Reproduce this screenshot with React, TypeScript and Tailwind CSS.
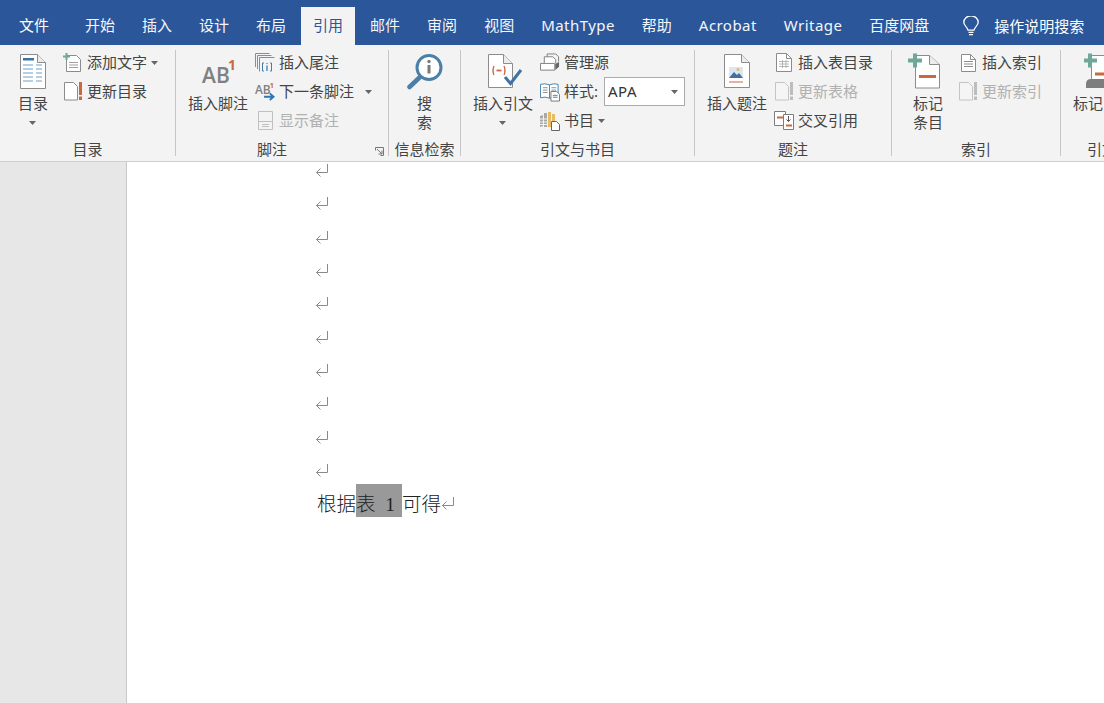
import React from 'react'

const tabs = ['开始', '插入', '设计', '布局', '引用', '邮件', '审阅', '视图', 'MathType', '帮助', 'Acrobat', 'Writage', '百度网盘']
const latinTabs = ['MathType', 'Acrobat', 'Writage']

function Caret({ className = '' }: { className?: string }) {
  return (
    <svg width="7" height="4" viewBox="0 0 7 4" className={className}>
      <path d="M0 0h7L3.5 4z" fill="#666" />
    </svg>
  )
}

function ReturnMark({ className = '' }: { className?: string }) {
  return (
    <svg width="14" height="14" viewBox="0 0 14 14" fill="none" stroke="#8a8a8a" strokeWidth="1" className={className}>
      <path d="M12.5 1v8.5H1.5M5.5 5.5l-4 4 4 4" />
    </svg>
  )
}

// --- ribbon icons ---
const TocIcon = () => (
  <svg width="26" height="35" viewBox="0 0 26 35" fill="none">
    <path d="M.5.5h17l8 8v26H.5z" fill="#fff" stroke="#8c8c8c" />
    <path d="M17.5.5v8h8" fill="#ececec" stroke="#8c8c8c" />
    <path d="M3 4h11v2.500H3z" fill="#3a74a5" />
    <path d="M3 11h10M16 11h6M3 15h10M16 15h6M3 19h10M16 19h6M3 23h10M16 23h6M3 27h10M16 27h6" stroke="#6f9fc4" />
  </svg>
)
const AddTextIcon = () => (
  <svg width="20" height="20" viewBox="0 0 20 20" fill="none">
    <path d="M3.500 2.500h10l4 4v12h-14z" fill="#fff" stroke="#8c8c8c" />
    <path d="M6 9.500h9M6 12h9M6 14.500h9" stroke="#a0a0a0" />
    <path d="M3.500 0v7M0 3.500h7" stroke="#6fa898" strokeWidth="2" />
  </svg>
)
const UpdateDocIcon = ({ muted }: { muted?: boolean }) => (
  <svg width="19" height="19" viewBox="0 0 19 19" fill="none">
    <path d="M.5.500h9l4 4v13.500h-13z" fill={muted ? '#f5f5f5' : '#fff'} stroke={muted ? '#c4c4c4' : '#8c8c8c'} />
    <path d="M15 0h3v13h-3zM15 14.500h3v3.500h-3z" fill={muted ? '#bdbdbd' : '#c8693f'} />
  </svg>
)
const EndnoteIcon = () => (
  <svg width="20" height="20" viewBox="0 0 20 20" fill="none">
    <path d="M.5 14V.5h14M2.500 16V2.500h14M4.500 18.500v-14h15" stroke="#8c8c8c" />
    <path d="M9 10H7.500v8H9M15 10h1.500v8H15" stroke="#3f7fb0" />
    <path d="M12 10v1M12 12.500V18" stroke="#3f7fb0" strokeWidth="1.300" />
  </svg>
)
const NextNoteIcon = () => (
  <svg width="21" height="21" viewBox="0 0 21 21">
    <text x="0" y="13" fontSize="12.500" fontWeight="600" fill="#808080" fontFamily="'Open Sans',sans-serif">AB</text>
    <text x="15.500" y="7" fontSize="7.500" fontWeight="700" fill="#c8693f" fontFamily="'Open Sans',sans-serif">1</text>
    <path d="M9.500 16h10M15.500 12.500l4 3.500-4 3.500" fill="none" stroke="#2e75b6" strokeWidth="2" />
  </svg>
)
const ShowNotesIcon = () => (
  <svg width="15" height="19" viewBox="0 0 15 19" fill="none" stroke="#c0c0c0">
    <path d="M.5.500h14v18H.5zM.5 10.500h14M4 13.500h7M4 15.500h7" />
  </svg>
)
const SearchIcon = () => (
  <svg width="37" height="37" viewBox="0 0 37 37" fill="none">
    <circle cx="23" cy="14.500" r="12" fill="#fff" stroke="#4a7fa8" strokeWidth="3" />
    <path d="M13.500 24.500L3.500 34" stroke="#4a7fa8" strokeWidth="4.500" strokeLinecap="round" />
    <circle cx="23" cy="8.500" r="1.700" fill="#7a7a7a" />
    <path d="M23 12v8.500" stroke="#7a7a7a" strokeWidth="3" />
  </svg>
)
const CiteIcon = () => (
  <svg width="40" height="36" viewBox="0 0 40 36" fill="none">
    <path d="M5.500 1.500h15l9 9v24h-24z" fill="#fff" stroke="#8c8c8c" />
    <path d="M20.500 1.500v9h9" fill="#ececec" stroke="#8c8c8c" />
    <path d="M11 13q-2 4.500 0 9M21 13q2 4.500 0 9" stroke="#c8693f" strokeWidth="1.300" />
    <path d="M13.500 17.500h5" stroke="#c8693f" strokeWidth="1.800" />
    <path d="M22 24l5.500 6.500L38 17" stroke="#3e75a5" strokeWidth="3" />
  </svg>
)
const SourcesIcon = () => (
  <svg width="21" height="19" viewBox="0 0 21 19" fill="none" stroke="#7d7d7d">
    <path d="M7.500 8V.500h9l3 3v5" />
    <path d="M4.500 10V3.500h9l3 3v4" fill="#fff" />
    <path d="M.5 10.500h15v7H.5z" fill="#fff" />
    <path d="M16 17.500l4-3.500V9l-4 2z" fill="#666" stroke="none" />
  </svg>
)
const StyleIcon = () => (
  <svg width="21" height="20" viewBox="0 0 21 20" fill="none">
    <path d="M10 2.500Q5 .5.500 2v14q5-1.500 9.500.5 4.500-2 9-.5V2q-4.500-1.500-9 .5zM10 2.500v14" fill="#fff" stroke="#3f7fb0" />
    <path d="M3 5.500h5M3 8h5M3 10.500h5M12 5.500h5M12 8h5" stroke="#8c8c8c" />
    <path d="M11.500 9.500h6l3 3v7h-9z" fill="#fff" stroke="#777" />
    <path d="M13.500 13.500h5M13.500 15.500h5" stroke="#3f7fb0" />
  </svg>
)
const BibIcon = () => (
  <svg width="20" height="20" viewBox="0 0 20 20" fill="none">
    <path d="M0 5l3-1v11l-3 1zM4 2h3v14H4z" fill="#a8a8a8" />
    <path d="M8 1h3v15H8z" fill="#e6bd66" />
    <path d="M12 3h3v7h-3z" fill="#e6bd66" />
    <path d="M0 8h7M0 11h7M0 13.500h7" stroke="#f3f3f3" />
    <path d="M11.500 10.500h5l3 3v6h-8z" fill="#fff" stroke="#666" />
  </svg>
)
const CaptionIcon = () => (
  <svg width="26" height="36" viewBox="0 0 26 36" fill="none">
    <path d="M.5 1.500h17l8 8v25H.5z" fill="#fff" stroke="#8c8c8c" />
    <path d="M17.500 1.500v8h8" fill="#ececec" stroke="#8c8c8c" />
    <path d="M5 14h14v11H5z" fill="#dce6f0" />
    <path d="M5 25l5-6 3 3 2-2 4 5z" fill="#41719c" />
    <circle cx="14" cy="16.500" r="1.500" fill="#e6bd66" />
    <path d="M5 29h14" stroke="#c8693f" />
  </svg>
)
const TableListIcon = () => (
  <svg width="16" height="19" viewBox="0 0 16 19" fill="none" stroke="#8c8c8c">
    <path d="M.5.500h10l5 5v13H.5z" fill="#fff" />
    <path d="M10.500.500v5h5" />
    <path d="M3 8.500h10M3 11h10M3 13.500h10M6.500 7v8M10 7v8" stroke="#a8a8a8" strokeWidth=".8" />
  </svg>
)
const CrossRefIcon = () => (
  <svg width="20" height="19" viewBox="0 0 20 19" fill="none">
    <path d="M.5.500h11v14H.5z" fill="#fff" stroke="#7d7d7d" />
    <path d="M3 6.500h6" stroke="#c8693f" strokeWidth="2" />
    <path d="M9.500 3.500h10v15h-10z" fill="#fff" stroke="#7d7d7d" />
    <path d="M14.500 5v5.500M12.500 8.500l2 2 2-2" stroke="#555" />
    <path d="M12 14.500h6" stroke="#c8693f" strokeWidth="2" />
  </svg>
)
const MarkIcon = () => (
  <svg width="40" height="36" viewBox="0 0 40 36" fill="none">
    <path d="M7.500 2.500h14l10 9v23.500h-24z" fill="#fff" stroke="#8c8c8c" />
    <path d="M21.500 2.500v9h10" fill="#ececec" stroke="#8c8c8c" />
    <path d="M11 23.500h17" stroke="#c8693f" strokeWidth="3" />
    <path d="M7 .5v14M0 7.500h14" stroke="#6fa898" strokeWidth="4" />
  </svg>
)
const MarkCiteIcon = () => (
  <svg width="38" height="36" viewBox="0 0 38 36" fill="none">
    <path d="M7.500 2.500h30v26h-30z" fill="#fff" stroke="#8c8c8c" />
    <path d="M11 21h19" stroke="#c8693f" strokeWidth="3" />
    <path d="M2 35v-4q0-5 5-5h31v9z" fill="#7d7d7d" />
    <path d="M6 .5v14M-1 7.500h14" stroke="#6fa898" strokeWidth="4" />
  </svg>
)
const IndexIcon = () => (
  <svg width="15" height="18" viewBox="0 0 15 18" fill="none" stroke="#8c8c8c">
    <path d="M.5.500h9l5 5v12H.5z" fill="#fff" />
    <path d="M9.500.500v5h5M3 7.500h9M3 10h9M3 12.500h9" />
  </svg>
)
const BulbIcon = () => (
  <svg width="16" height="20" viewBox="0 0 16 22" fill="none" stroke="#fff" strokeWidth="1.300" preserveAspectRatio="none">
    <path d="M5 15.500C4 11.500.8 10.500.8 7a7.200 7.200 0 0114.400 0c0 3.500-3.200 4.500-4.200 8.500z" />
    <path d="M5.500 18h5M6 20.500h4" />
  </svg>
)

function BigButton({ icon, lines, caret, width }: { icon: React.ReactNode; lines: string[]; caret?: boolean; width: string }) {
  return (
    <div className={`flex flex-col items-center pt-[8px] shrink-0 ${width}`}>
      <div className="h-[36px] flex items-center justify-center">{icon}</div>
      <div className="mt-[5px] text-center leading-[19px] whitespace-nowrap">
        {lines.map((l) => (
          <div key={l}>{l}</div>
        ))}
        {caret && (
          <div className="h-[19px] flex items-center justify-center">
            <Caret />
          </div>
        )}
      </div>
    </div>
  )
}

function SmallRow({ icon, label, caret, disabled }: { icon: React.ReactNode; label: string; caret?: boolean; disabled?: boolean }) {
  return (
    <div className={`h-[29px] flex items-center whitespace-nowrap ${disabled ? 'text-[#b1b1b1]' : ''}`}>
      <div className="w-[20px] mr-[4px] flex items-center justify-center shrink-0">{icon}</div>
      <span>{label}</span>
      {caret && <Caret className="ml-[4px]" />}
    </div>
  )
}

function Group({ label, width, pad = '', children, launcher }: { label: string; width: string; pad?: string; children: React.ReactNode; launcher?: boolean }) {
  return (
    <div className={`relative shrink-0 flex flex-col ${width}`}>
      <div className={`h-[95px] flex ${pad}`}>{children}</div>
      <div className={`leading-[19px] text-center whitespace-nowrap ${launcher ? 'pr-[20px]' : ''}`}>{label}</div>
      {launcher && (
        <svg width="9" height="9" viewBox="0 0 9 9" fill="none" stroke="#777" className="absolute right-[4px] bottom-[5px]">
          <path d="M.5 3.500V.5h8v8h-3M2 2l5 5M7 3.500V7H3.500" />
        </svg>
      )}
    </div>
  )
}

const Sep = () => <div className="w-px h-[106px] mt-[5px] bg-[#c6c6c6] shrink-0" />

export default function App() {
  return (
    <div className="h-[703px] w-[1104px] overflow-hidden bg-white flex flex-col text-[15px] text-[#444] font-['Noto_Sans','Noto_Sans_CJK_SC',sans-serif]">
      {/* Tabs */}
      <div className="h-[45px] bg-[#2b579a] flex items-end pl-[19px] text-white shrink-0">
        <div className="h-[38px] flex items-center pb-[2px] mr-[36px]">文件</div>
        <div className="flex gap-[27px]">
          {tabs.map((t) =>
            t === '引用' ? (
              <div key={t} className="h-[38px] -mx-[12px] px-[12px] flex items-center pb-[2px] bg-[#f3f3f3] text-[#2b579a]">
                {t}
              </div>
            ) : (
              <div key={t} className={`h-[38px] flex items-center pb-[2px] text-[#f4f6fa] ${latinTabs.includes(t) ? 'tracking-[0.45px]' : ''}`}>
                {t}
              </div>
            ),
          )}
        </div>
        <div className="h-[38px] flex items-center ml-[34px]">
          <BulbIcon />
          <span className="ml-[15px]">操作说明搜索</span>
        </div>
      </div>

      {/* Ribbon */}
      <div className="h-[117px] bg-[#f3f3f3] border-b border-[#cfcfcf] flex overflow-hidden shrink-0">
        <Group label="目录" width="w-[175px]" pad="pl-[12px]">
          <BigButton icon={<TocIcon />} lines={['目录']} caret width="w-[42px]" />
          <div className="ml-[9px] pt-[3px]">
            <SmallRow icon={<AddTextIcon />} label="添加文字" caret />
            <SmallRow icon={<UpdateDocIcon />} label="更新目录" />
          </div>
        </Group>
        <Sep />
        <Group label="脚注" width="w-[212px]" pad="pl-[10px]" launcher>
          <BigButton
            icon={
              <div className="relative w-[36px] h-[36px]">
                <span className="absolute left-[2px] top-[7px] text-[21px] leading-[30px] font-semibold text-[#808080] font-['Open_Sans',sans-serif]">AB</span>
                <span className="absolute left-[28px] top-[2.500px] text-[14px] leading-[18px] font-bold text-[#c8693f]">1</span>
              </div>
            }
            lines={['插入脚注']}
            width="w-[64px]"
          />
          <div className="ml-[5px] pt-[3px]">
            <SmallRow icon={<EndnoteIcon />} label="插入尾注" />
            <div className="flex items-center">
              <SmallRow icon={<NextNoteIcon />} label="下一条脚注" />
              <Caret className="ml-[11px]" />
            </div>
            <SmallRow icon={<ShowNotesIcon />} label="显示备注" disabled />
          </div>
        </Group>
        <Sep />
        <Group label="信息检索" width="w-[71px]">
          <BigButton icon={<SearchIcon />} lines={['搜', '索']} width="w-full" />
        </Group>
        <Sep />
        <Group label="引文与书目" width="w-[233px]" pad="pl-[10px]">
          <BigButton icon={<CiteIcon />} lines={['插入引文']} caret width="w-[64px]" />
          <div className="ml-[5px] pt-[3px]">
            <SmallRow icon={<SourcesIcon />} label="管理源" />
            <div className="flex items-center">
              <SmallRow icon={<StyleIcon />} label="样式:" />
              <div className="ml-[6px] w-[81px] h-[29px] bg-white border border-[#ababab] flex items-center justify-between pl-[3px] pr-[6px] text-[#333]">
                <span className="tracking-[0.5px]">APA</span>
                <Caret />
              </div>
            </div>
            <SmallRow icon={<BibIcon />} label="书目" caret />
          </div>
        </Group>
        <Sep />
        <Group label="题注" width="w-[196px]" pad="pl-[10px]">
          <BigButton icon={<CaptionIcon />} lines={['插入题注']} width="w-[64px]" />
          <div className="ml-[5px] pt-[3px]">
            <SmallRow icon={<TableListIcon />} label="插入表目录" />
            <SmallRow icon={<UpdateDocIcon muted />} label="更新表格" disabled />
            <SmallRow icon={<CrossRefIcon />} label="交叉引用" />
          </div>
        </Group>
        <Sep />
        <Group label="索引" width="w-[168px]" pad="pl-[14px]">
          <BigButton icon={<MarkIcon />} lines={['标记', '条目']} width="w-[44px]" />
          <div className="ml-[8px] pt-[3px]">
            <SmallRow icon={<IndexIcon />} label="插入索引" />
            <SmallRow icon={<UpdateDocIcon muted />} label="更新索引" disabled />
          </div>
        </Group>
        <Sep />
        <div className="shrink-0 flex flex-col pl-[12px]">
          <div className="h-[95px] flex">
            <BigButton icon={<MarkCiteIcon />} lines={['标记引文']} width="w-[60px]" />
          </div>
          <div className="leading-[19px] pl-[14px] whitespace-nowrap">引文目录</div>
        </div>
      </div>

      {/* Document */}
      <div className="flex-1 flex min-h-0">
        <div className="w-[127px] bg-[#e6e7e6] border-r border-[#c8c8c8] shrink-0" />
        <div className="flex-1 pl-[188px] pt-[1px]">
          <div className="flex flex-col gap-[19.33px]">
            {Array.from({ length: 10 }).map((_, i) => (
              <ReturnMark key={i} />
            ))}
          </div>
          <div className="mt-[7px] h-[33px] flex items-start pl-[2px] text-[19.500px] leading-[25px] font-light text-[#222] font-['Liberation_Serif','Noto_Sans_CJK_SC',serif] whitespace-pre">
            <span className="pt-[8px]">根据</span>
            <span className="pt-[8px] h-[33px] w-[46px] bg-[#999]">表{'  '}1</span>
            <span className="pt-[8px]">可得</span>
            <ReturnMark className="mt-[12px]" />
          </div>
        </div>
      </div>
    </div>
  )
}
